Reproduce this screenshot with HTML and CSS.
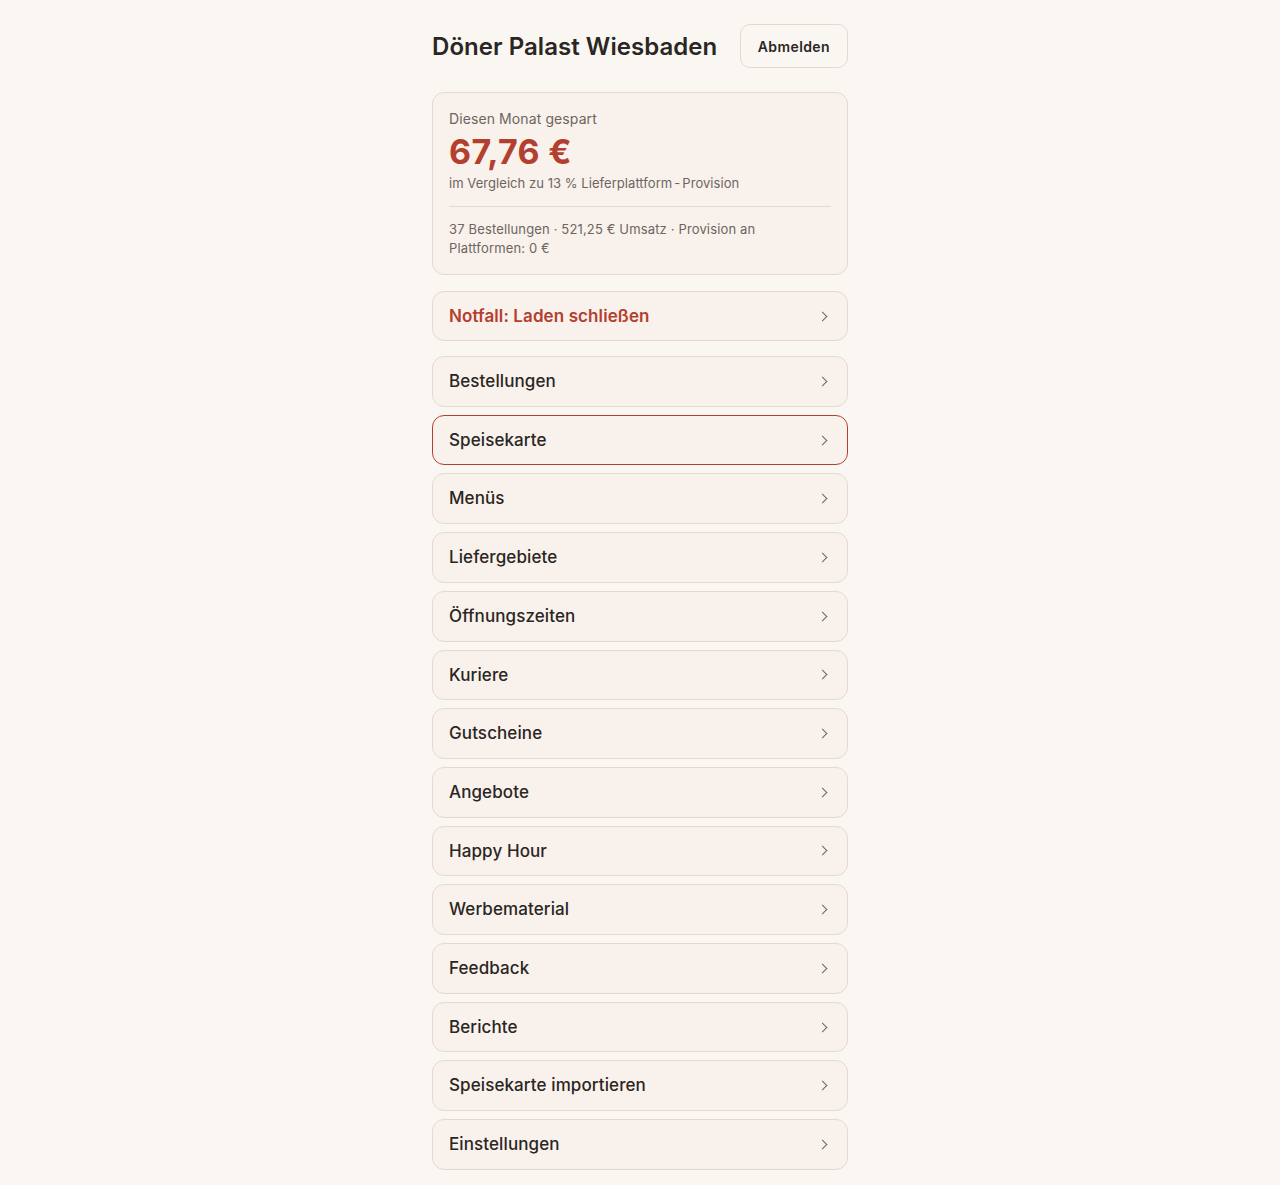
FILE: index.html
```html
<!DOCTYPE html>
<html lang="de">

<head>
  <meta charset="UTF-8">
  <meta name="viewport" content="width=device-width, initial-scale=1.0">
  <title>Döner Palast Wiesbaden</title>
  <link rel="stylesheet" href="styles.css">
</head>

<body>
  <main class="dashboard">
    <header class="topbar">
      <h1>Döner Palast Wiesbaden</h1>
      <button class="logout">Abmelden</button>
    </header>

    <!-- Savings summary -->
    <section class="savings">
      <p class="savings-label">Diesen Monat gespart</p>
      <p class="savings-amount">67,76 €</p>
      <p class="savings-note">im Vergleich zu 13 % Lieferplattform<span class="dash">-</span>Provision</p>
      <hr>
      <p class="savings-stats">37 Bestellungen · 521,25 € Umsatz · Provision an Plattformen: 0 €</p>
    </section>

    <a class="nav-item emergency" href="#">Notfall: Laden schließen<span class="chevron"></span></a>

    <nav class="nav-list">
      <a class="nav-item" href="#">Bestellungen<span class="chevron"></span></a>
      <a class="nav-item active" href="#">Speisekarte<span class="chevron"></span></a>
      <a class="nav-item" href="#">Menüs<span class="chevron"></span></a>
      <a class="nav-item" href="#">Liefergebiete<span class="chevron"></span></a>
      <a class="nav-item" href="#">Öffnungszeiten<span class="chevron"></span></a>
      <a class="nav-item" href="#">Kuriere<span class="chevron"></span></a>
      <a class="nav-item" href="#">Gutscheine<span class="chevron"></span></a>
      <a class="nav-item" href="#">Angebote<span class="chevron"></span></a>
      <a class="nav-item" href="#">Happy Hour<span class="chevron"></span></a>
      <a class="nav-item" href="#">Werbematerial<span class="chevron"></span></a>
      <a class="nav-item" href="#">Feedback<span class="chevron"></span></a>
      <a class="nav-item" href="#">Berichte<span class="chevron"></span></a>
      <a class="nav-item" href="#">Speisekarte importieren<span class="chevron"></span></a>
      <a class="nav-item" href="#">Einstellungen<span class="chevron"></span></a>
    </nav>
  </main>
</body>

</html>
```

FILE: styles.css
```css
body {
  margin: 0;
  font-family: Inter, "Noto Sans", sans-serif;
  background-color: #faf7f2;
  color: #2a2623;
}

.dashboard {
  width: 416px;
  margin: 0 auto;
  padding: 24px 0 16px;
}

.topbar {
  display: flex;
  align-items: center;
  justify-content: space-between;
  margin-bottom: 24px;
}

.topbar h1 {
  margin: 0;
  font-size: 24px;
  font-weight: 600;
  letter-spacing: 0.05px;
}

.logout {
  height: 44px;
  padding: 0 17px;
  font-family: inherit;
  font-size: 14px;
  font-weight: 600;
  letter-spacing: 0.4px;
  color: #2a2623;
  background-color: #faf7f2;
  border: 1px solid #e3d9d2;
  border-radius: 10px;
  cursor: pointer;
}

/* Savings card */
.savings {
  padding: 16px 16px 16px;
  background-color: #f9f1ec;
  border: 1px solid #e3d9d2;
  border-radius: 12px;
  margin-bottom: 16px;
}

.savings p {
  margin: 0;
}

.savings-label {
  font-size: 14px;
  color: #6d6560;
  line-height: 20px;
  letter-spacing: 0.1px;
}

.savings-amount {
  font-size: 34px;
  font-weight: 700;
  color: #b3402e;
  line-height: 44px;
  letter-spacing: 0.3px;
  margin-top: 1px !important;
}

.savings-note {
  font-size: 13px;
  color: #6d6560;
  line-height: 19px;
  letter-spacing: 0.05px;
}

.savings-note .dash {
  padding: 0 2px;
}

.savings hr {
  border: none;
  border-top: 1px solid #e3d9d2;
  margin: 13px 0 13px;
}

.savings-stats {
  font-size: 13px;
  color: #6d6560;
  line-height: 19px;
  letter-spacing: 0.15px;
}

/* Navigation rows */
.nav-list {
  display: flex;
  flex-direction: column;
  gap: 8px;
  margin-top: 15px;
}

.nav-item {
  display: flex;
  align-items: center;
  justify-content: space-between;
  padding: 12px 16px;
  font-size: 17px;
  font-weight: 450;
  line-height: 24.7px;
  letter-spacing: 0.1px;
  color: #2a2623;
  text-decoration: none;
  background-color: #f9f1ec;
  border: 1px solid #e3d9d2;
  border-radius: 12px;
}

.nav-item.emergency {
  color: #b3402e;
  font-weight: 600;
  line-height: 24px;
}

.nav-item.active {
  border-color: #b3402e;
}

.chevron {
  width: 6px;
  height: 6px;
  margin-right: 5px;
  border-top: 1.6px solid #6d6560;
  border-right: 1.6px solid #6d6560;
  transform: rotate(45deg);
}
```
